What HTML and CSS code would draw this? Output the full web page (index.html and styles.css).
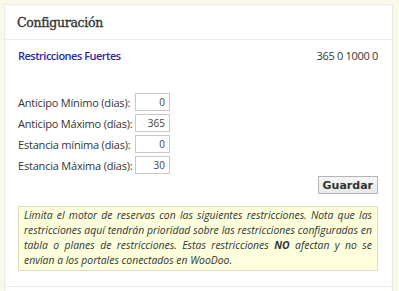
FILE: index.html
```html
<!DOCTYPE html>
<html lang="es">
<head>
<meta charset="utf-8">
<link rel="stylesheet" href="styles.css">
</head>
<body>
<div class="card">
  <div class="card-head"><h2>Configuración</h2></div>
  <div class="card-body">
    <div class="title-row">
      <span class="title">Restricciones Fuertes</span>
      <span class="values">365 0 1000 0</span>
    </div>
    <div class="form">
      <label>Anticipo Mínimo (dias):</label><input type="text" value="0">
      <label>Anticipo Máximo (días):</label><input type="text" value="365">
      <label>Estancia mínima (dias):</label><input type="text" value="0">
      <label>Estancia Máxima (dias):</label><input type="text" value="30">
    </div>
    <div class="actions"><button>Guardar</button></div>
    <div class="notice">Limita el motor de reservas con las siguientes restricciones. Nota que las restricciones aquí tendrán prioridad sobre las restricciones configuradas en tabla o planes de restricciones. Estas restricciones <b>NO</b> afectan y no se envían a los portales conectados en WooDoo.</div>
  </div>
  <div class="card-next"></div>
</div>
</body>
</html>
```
FILE: styles.css
```css
html, body { margin: 0; padding: 0; }
body {
  background: #f9f8e9;
  font-family: "Open Sans", sans-serif;
  color: #333;
  height: 291px;
  overflow: hidden;
}
.card {
  margin: 4px 0 0 4px;
  width: 387px;
  background: #fff;
  border: 1px solid #e8e8e8;
  border-bottom: none;
  height: 300px;
}
.card-head {
  height: 34px;
  border-bottom: 1px solid #eee;
  display: flex;
  align-items: center;
  padding-left: 12px;
}
.card-head h2 {
  margin: 0;
  font-family: "DejaVu Serif", serif;
  font-size: 12.5px;
  font-weight: normal;
  -webkit-text-stroke: 0.35px #333;
  color: #333;
  letter-spacing: -0.3px;
}
.card-body {
  padding: 8px 14px 0 13px;
}
.title-row {
  display: flex;
  justify-content: space-between;
  font-size: 11px;
  height: 16px;
  line-height: 16px;
}
.title { color: #2a2aa6; font-weight: 600; letter-spacing: -0.5px; }
.values { color: #333; letter-spacing: -0.3px; }
.form {
  margin-top: 29px;
  display: grid;
  grid-template-columns: 117px 35px;
  row-gap: 3px;
  align-items: center;
}
.form label {
  font-size: 11px;
  letter-spacing: -0.2px;
  color: #333;
}
.form input {
  box-sizing: border-box;
  height: 18px;
  width: 35px;
  border: 1px solid #c8c8c8;
  font-family: "Open Sans", sans-serif;
  font-size: 10px;
  text-align: right;
  padding: 0 4px;
  color: #444;
  margin: 0;
}
.actions {
  display: flex;
  justify-content: flex-end;
  margin-top: 2px;
}
.actions button {
  font-family: "DejaVu Sans", sans-serif;
  font-size: 11px;
  font-weight: bold;
  color: #333;
  background: linear-gradient(#f6f6f6, #e8e8e8);
  border: 1px solid #b5b5b5;
  height: 18px;
  padding: 0 4px;
  margin: 0;
}
.notice {
  margin-top: 12px;
  background: #fdffdc;
  border: 1px solid #dcdcc0;
  font-style: italic;
  font-size: 10.4px;
  line-height: 15px;
  padding: 1px 5px 2px 5px;
  text-align: justify;
  color: #333;
}
.notice b { font-weight: bold; }
.card-next {
  margin-top: 15px;
  border-top: 1px solid #eee;
}
```
